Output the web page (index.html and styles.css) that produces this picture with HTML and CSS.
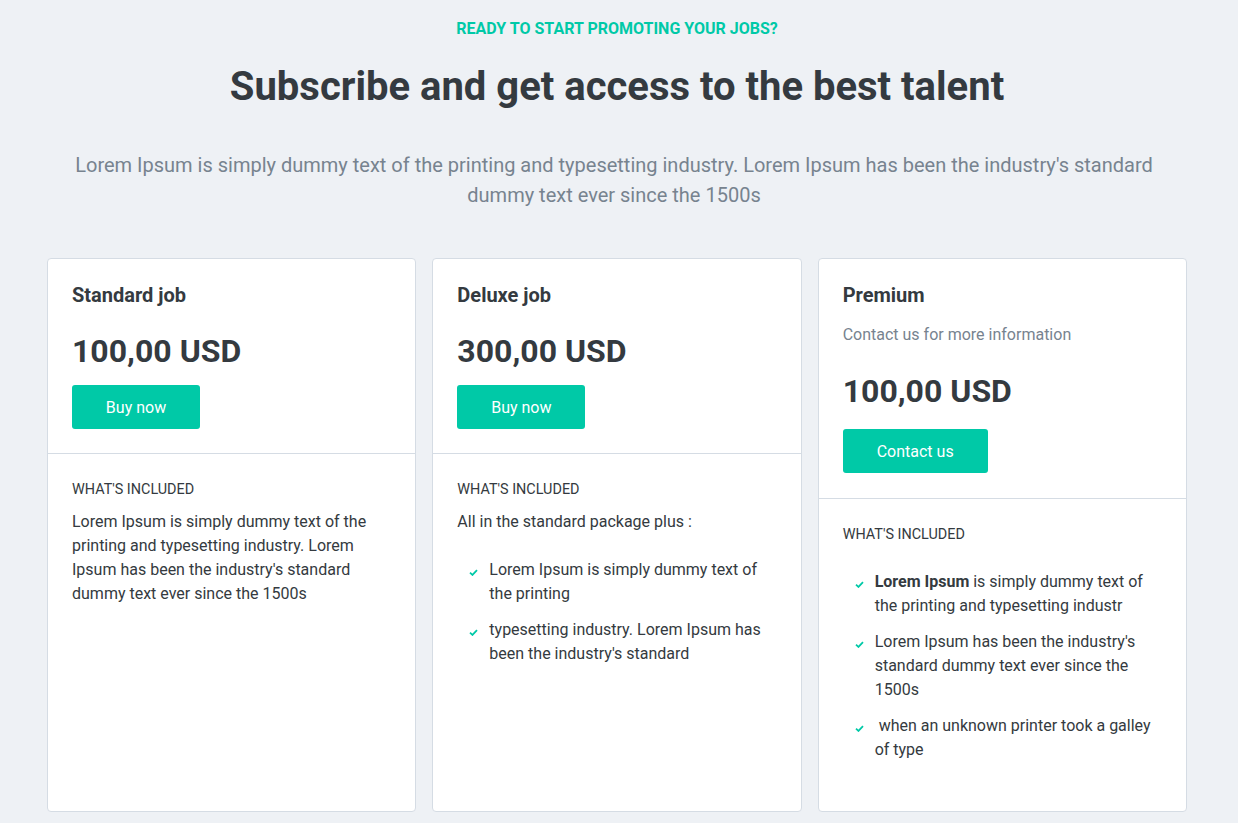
FILE: index.html
```html
<!DOCTYPE html>
<html lang="en">
<head>
<meta charset="utf-8">
<title>Pricing</title>
<link rel="stylesheet" href="styles.css">
</head>
<body>
<main class="page">
  <header class="intro">
    <p class="eyebrow">Ready to start promoting your jobs?</p>
    <h1 class="title">Subscribe and get access to the best talent</h1>
    <p class="lead">Lorem Ipsum is simply dummy text of the printing and typesetting industry. Lorem Ipsum has been the industry's standard dummy text ever since the 1500s</p>
  </header>

  <section class="plans">
    <article class="plan">
      <div class="plan-top">
        <h2 class="plan-name">Standard job</h2>
        <div class="plan-price">100,00 USD</div>
        <a class="btn" href="#">Buy now</a>
      </div>
      <div class="plan-body">
        <h3 class="included">What's included</h3>
        <p class="body-text">Lorem Ipsum is simply dummy text of the printing and typesetting industry. Lorem Ipsum has been the industry's standard dummy text ever since the 1500s</p>
      </div>
    </article>

    <article class="plan">
      <div class="plan-top">
        <h2 class="plan-name">Deluxe job</h2>
        <div class="plan-price">300,00 USD</div>
        <a class="btn" href="#">Buy now</a>
      </div>
      <div class="plan-body">
        <h3 class="included">What's included</h3>
        <p class="body-text body-text-lead">All in the standard package plus :</p>
        <ul class="checks">
          <li><svg class="check" viewBox="0 0 10 8" aria-hidden="true"><path d="M1 4.2 L3.8 6.8 L9 1.2" fill="none" stroke="#00c9a7" stroke-width="2"/></svg><span class="item-text">Lorem Ipsum is simply dummy text of the printing</span></li>
          <li><svg class="check" viewBox="0 0 10 8" aria-hidden="true"><path d="M1 4.2 L3.8 6.8 L9 1.2" fill="none" stroke="#00c9a7" stroke-width="2"/></svg><span class="item-text">typesetting industry. Lorem Ipsum has been the industry's standard</span></li>
        </ul>
      </div>
    </article>

    <article class="plan">
      <div class="plan-top">
        <h2 class="plan-name">Premium</h2>
        <p class="plan-sub">Contact us for more information</p>
        <div class="plan-price">100,00 USD</div>
        <a class="btn btn-wide" href="#">Contact us</a>
      </div>
      <div class="plan-body">
        <h3 class="included">What's included</h3>
        <ul class="checks checks-spaced">
          <li><svg class="check" viewBox="0 0 10 8" aria-hidden="true"><path d="M1 4.2 L3.8 6.8 L9 1.2" fill="none" stroke="#00c9a7" stroke-width="2"/></svg><span class="item-text"><b class="strong">Lorem Ipsum</b> is simply dummy text of the printing and typesetting industr</span></li>
          <li><svg class="check" viewBox="0 0 10 8" aria-hidden="true"><path d="M1 4.2 L3.8 6.8 L9 1.2" fill="none" stroke="#00c9a7" stroke-width="2"/></svg><span class="item-text">Lorem Ipsum has been the industry's standard dummy text ever since the 1500s</span></li>
          <li><svg class="check" viewBox="0 0 10 8" aria-hidden="true"><path d="M1 4.2 L3.8 6.8 L9 1.2" fill="none" stroke="#00c9a7" stroke-width="2"/></svg><span class="item-text">&nbsp;when an unknown printer took a galley of type</span></li>
        </ul>
      </div>
    </article>
  </section>
</main>
</body>
</html>
```

FILE: styles.css
```css
* { box-sizing: border-box; }

html, body {
  margin: 0;
  background: #eef1f5;
}

body {
  font-family: Roboto, "Liberation Sans", Arial, sans-serif;
  color: #343a40;
}

.page {
  width: 1140px;
  margin: 0 0 0 47px;
  padding-top: 19px;
  padding-bottom: 12px;
}

.intro {
  text-align: center;
  padding: 0 25px;
}

.eyebrow {
  margin: 0;
  font-size: 16px;
  line-height: 20px;
  font-weight: 700;
  text-transform: uppercase;
  color: #00c9a7;
}

.title {
  margin: 24px 0 0;
  font-size: 40px;
  line-height: 48px;
  font-weight: 700;
  color: #343a40;
}

.lead {
  margin: 39px 0 0;
  padding-right: 6px;
  font-size: 20px;
  line-height: 30px;
  color: #77838f;
}

.plans {
  margin-top: 48px;
  display: grid;
  grid-template-columns: repeat(3, 1fr);
  gap: 16px;
}

.plan {
  background: #fff;
  border: 1px solid #d5dce4;
  border-radius: 4px;
  height: 554px;
  display: flex;
  flex-direction: column;
}

.plan-top {
  padding: 24px 24px 24px;
  border-bottom: 1px solid #d5dce4;
}

.plan-name {
  margin: 0;
  font-size: 20px;
  line-height: 24px;
  font-weight: 700;
  color: #343a40;
}

.plan-sub {
  margin: 16px 0 0;
  font-size: 16px;
  line-height: 24px;
  color: #77838f;
}

.plan-price {
  margin-top: 26px;
  font-size: 32px;
  line-height: 36px;
  font-weight: 700;
  color: #343a40;
}

.btn {
  display: flex;
  align-items: center;
  justify-content: center;
  margin-top: 16px;
  width: 128px;
  height: 44px;
  border-radius: 3px;
  background: #00c9a7;
  color: #fff;
  font-size: 16px;
  text-decoration: none;
}

.btn-wide {
  width: 145px;
  margin-top: 20px;
  margin-bottom: 1px;
}

.plan-body {
  padding: 25px 24px 24px;
}

.included {
  margin: 0;
  font-size: 14.4px;
  line-height: 21px;
  font-weight: 400;
  text-transform: uppercase;
  color: #343a40;
}

.body-text {
  margin: 10px 0 0;
  font-size: 16px;
  line-height: 24px;
  color: #343a40;
}

.body-text-lead { margin-bottom: 24px; }

.checks {
  list-style: none;
  margin: 0;
  padding: 0 0 0 12px;
  display: flex;
  flex-direction: column;
  gap: 12px;
}

.checks-spaced { margin-top: 25px; }

.checks li {
  display: flex;
  align-items: flex-start;
  gap: 11px;
  font-size: 16px;
  line-height: 24px;
  color: #343a40;
}

.item-text { display: block; }

.check {
  flex: none;
  width: 9px;
  height: 7px;
  margin-top: 11px;
}

.strong { font-weight: 700; }
```
